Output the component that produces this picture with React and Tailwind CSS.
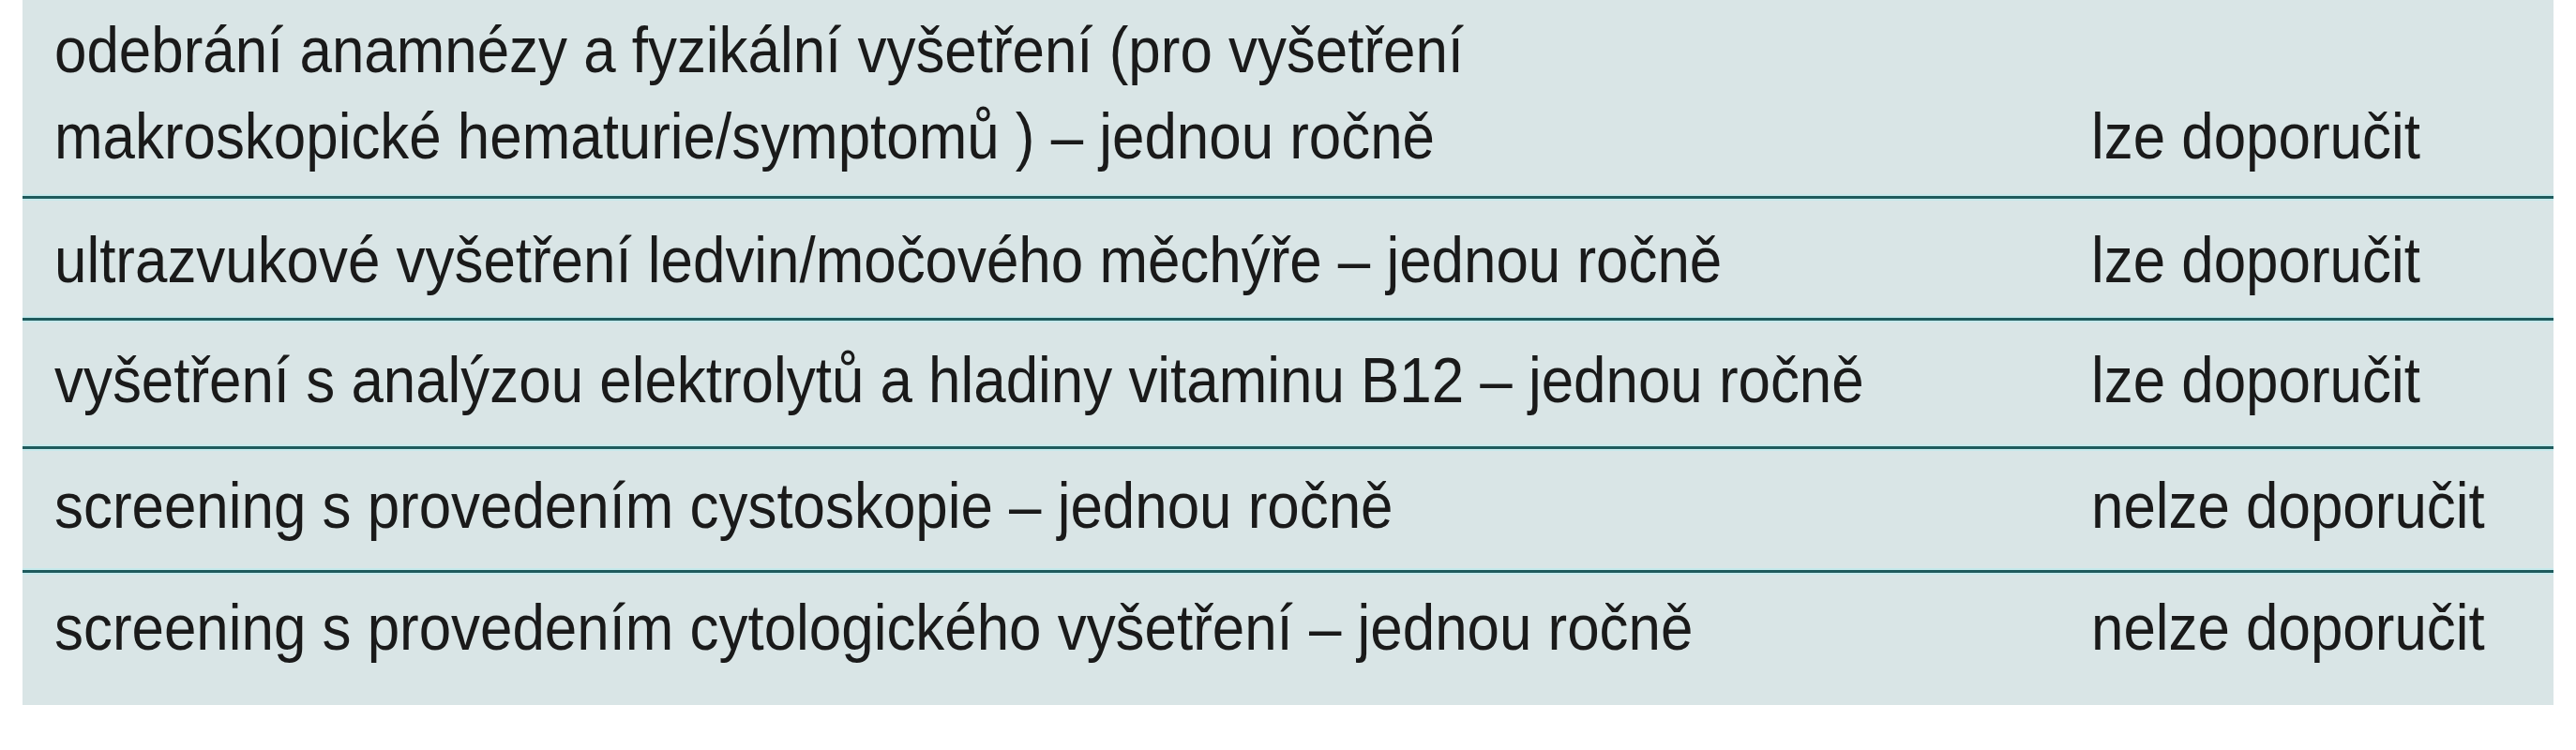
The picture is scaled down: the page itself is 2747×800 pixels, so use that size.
import React from "react";

const rows = [
  { lines: ["odebrání anamnézy a fyzikální vyšetření (pro vyšetření", "makroskopické hematurie/symptomů ) – jednou ročně"], rec: "lze doporučit", pad: "pt-[7px] pb-[16px]" },
  { lines: ["ultrazvukové vyšetření ledvin/močového měchýře – jednou ročně"], rec: "lze doporučit", pad: "pt-[17px] pb-[14px]" },
  { lines: ["vyšetření s analýzou elektrolytů a hladiny vitaminu B12 – jednou ročně"], rec: "lze doporučit", pad: "pt-[15px] pb-[23px]" },
  { lines: ["screening s provedením cystoskopie – jednou ročně"], rec: "nelze doporučit", pad: "pt-[12px] pb-[21px]" },
  { lines: ["screening s provedením cytologického vyšetření – jednou ročně"], rec: "nelze doporučit", pad: "pt-[10px] pb-[37px]" },
];

export default function App() {
  return (
    <div className="w-[2747px] h-[800px] bg-white">
      <div
        className="ml-[24px] w-[2699px] bg-[#d9e5e6] text-[#1a1a1a] text-[68px] leading-[92px]"
        style={{ fontFamily: '"Liberation Sans", Arial, sans-serif' }}
      >
        {rows.map((r, i) => (
          <div key={i}>
            <div className={`flex items-end ${r.pad}`}>
              <div className="w-[2206px] pl-[34px]">
                {r.lines.map((l, j) => (
                  <div key={j} className="whitespace-nowrap origin-left scale-x-[0.91]">{l}</div>
                ))}
              </div>
              <div className="whitespace-nowrap origin-left scale-x-[0.91]">{r.rec}</div>
            </div>
            {i < 4 && (
              <div>
                <div className="h-[2px] bg-[#c6e9ec]" />
                <div className="h-[3px] bg-[#1f5b5d]" />
                <div className="h-[2px] bg-[#c6e9ec]" />
              </div>
            )}
          </div>
        ))}
      </div>
    </div>
  );
}
